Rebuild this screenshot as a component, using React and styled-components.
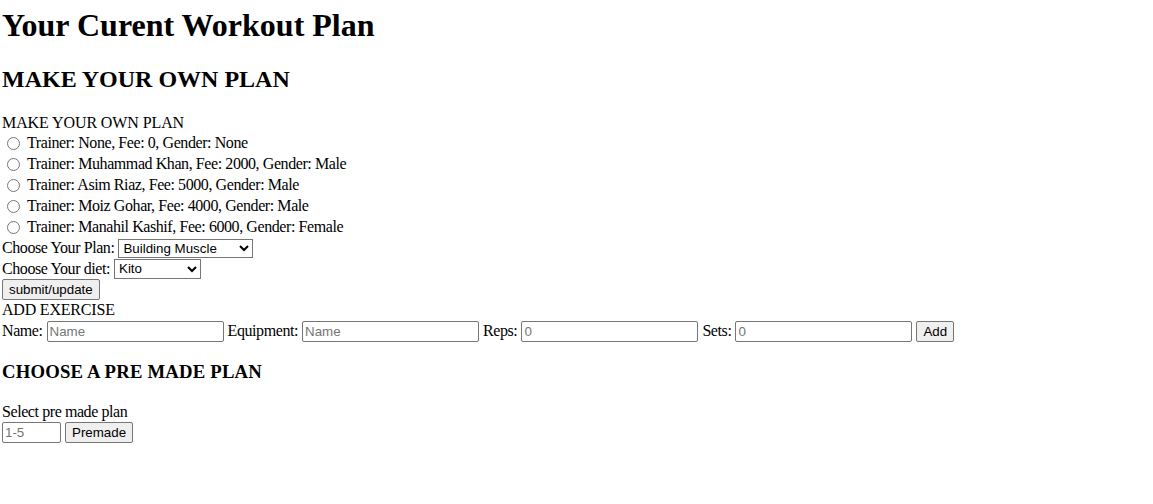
import React from "react";
import styled, { createGlobalStyle } from "styled-components";

const GlobalStyle = createGlobalStyle`
  body {
    margin: 0;
    background: #fff;
    color: #000;
    font-family: "Liberation Serif", "Times New Roman", serif;
    font-size: 16px;
  }
`;

const Page = styled.div`
  padding: 0 2px;
`;

const Title = styled.h1`
  font-size: 32px;
  line-height: 37px;
  margin: 7px 0 21px;
`;

const SectionTitle = styled.h2`
  font-size: 24px;
  line-height: 28px;
  margin: 0 0 19.5px;
`;

const SubTitle = styled.h3`
  font-size: 18.72px;
  line-height: 22px;
  margin: 19px 0;
  letter-spacing: 0.2px;
`;

const Row = styled.div`
  display: flex;
  align-items: center;
  gap: ${(p) => p.$gap ?? 4}px;
  height: ${(p) => p.$h ?? 21}px;
  letter-spacing: ${(p) => p.$ls ?? -0.42}px;
  white-space: nowrap;
`;

const Radio = styled.input.attrs({ type: "radio" })`
  width: 13px;
  height: 13px;
  margin: 0 0 0 5px;
  accent-color: #767676;
`;

const Field = styled.input`
  font-family: "Liberation Sans", Arial, sans-serif;
  font-size: 13.333px;
  letter-spacing: 0;
  width: ${(p) => p.$w}px;
  box-sizing: border-box;
  height: 21px;
  padding: 1px 2px;
  border: 1px solid #767676;
  border-radius: 2px;
  margin: 0;
  &::placeholder {
    color: #757575;
  }
`;

const Select = styled.select`
  font-family: "Liberation Sans", Arial, sans-serif;
  font-size: 13.333px;
  letter-spacing: 0;
  width: ${(p) => p.$w}px;
  height: ${(p) => p.$h ?? 19}px;
  margin: 0;
  border: 1px solid #767676;
  border-radius: 0;
  background: #fff;
  color: #000;
`;

const Button = styled.button`
  font-family: "Liberation Sans", Arial, sans-serif;
  font-size: 13.333px;
  letter-spacing: 0;
  padding: 1px 6px;
  height: 21px;
  margin: 0;
  border: 1px solid #767676;
  border-radius: 2px;
  background: #efefef;
  color: #000;
`;

const trainers = [
  "Trainer: None, Fee: 0, Gender: None",
  "Trainer: Muhammad Khan, Fee: 2000, Gender: Male",
  "Trainer: Asim Riaz, Fee: 5000, Gender: Male",
  "Trainer: Moiz Gohar, Fee: 4000, Gender: Male",
  "Trainer: Manahil Kashif, Fee: 6000, Gender: Female",
];

export default function App() {
  return (
    <Page>
      <GlobalStyle />
      <Title>Your Curent Workout Plan</Title>
      <SectionTitle>MAKE YOUR OWN PLAN</SectionTitle>
      <form onSubmit={(e) => e.preventDefault()}>
        <Row $h={20} $ls={-0.1}>
          MAKE YOUR OWN PLAN
        </Row>
        {trainers.map((t) => (
          <Row key={t} $gap={7}>
            <Radio name="trainer" />
            <span>{t}</span>
          </Row>
        ))}
        <Row>
          <span>Choose Your Plan:</span>
          <Select $w={135} defaultValue="Building Muscle">
            <option>Building Muscle</option>
            <option>Losing Weight</option>
            <option>Cardio</option>
          </Select>
        </Row>
        <Row $h={20}>
          <span>Choose Your diet:</span>
          <Select $w={87} $h={20} defaultValue="Kito">
            <option>Kito</option>
            <option>Vegan</option>
            <option>Balanced</option>
          </Select>
        </Row>
        <Row>
          <Button type="submit">submit/update</Button>
        </Row>
        <Row $ls={-0.2}>ADD EXERCISE</Row>
        <Row>
          <span>Name:</span>
          <Field $w={177} placeholder="Name" />
          <span>Equipment:</span>
          <Field $w={177} placeholder="Name" />
          <span>Reps:</span>
          <Field $w={177} type="number" placeholder="0" />
          <span>Sets:</span>
          <Field $w={177} type="number" placeholder="0" />
          <Button type="button">Add</Button>
        </Row>
      </form>
      <SubTitle>CHOOSE A PRE MADE PLAN</SubTitle>
      <Row $h={20}>Select pre made plan</Row>
      <Row $h={22}>
        <Field $w={59} placeholder="1-5" />
        <Button type="button">Premade</Button>
      </Row>
    </Page>
  );
}
